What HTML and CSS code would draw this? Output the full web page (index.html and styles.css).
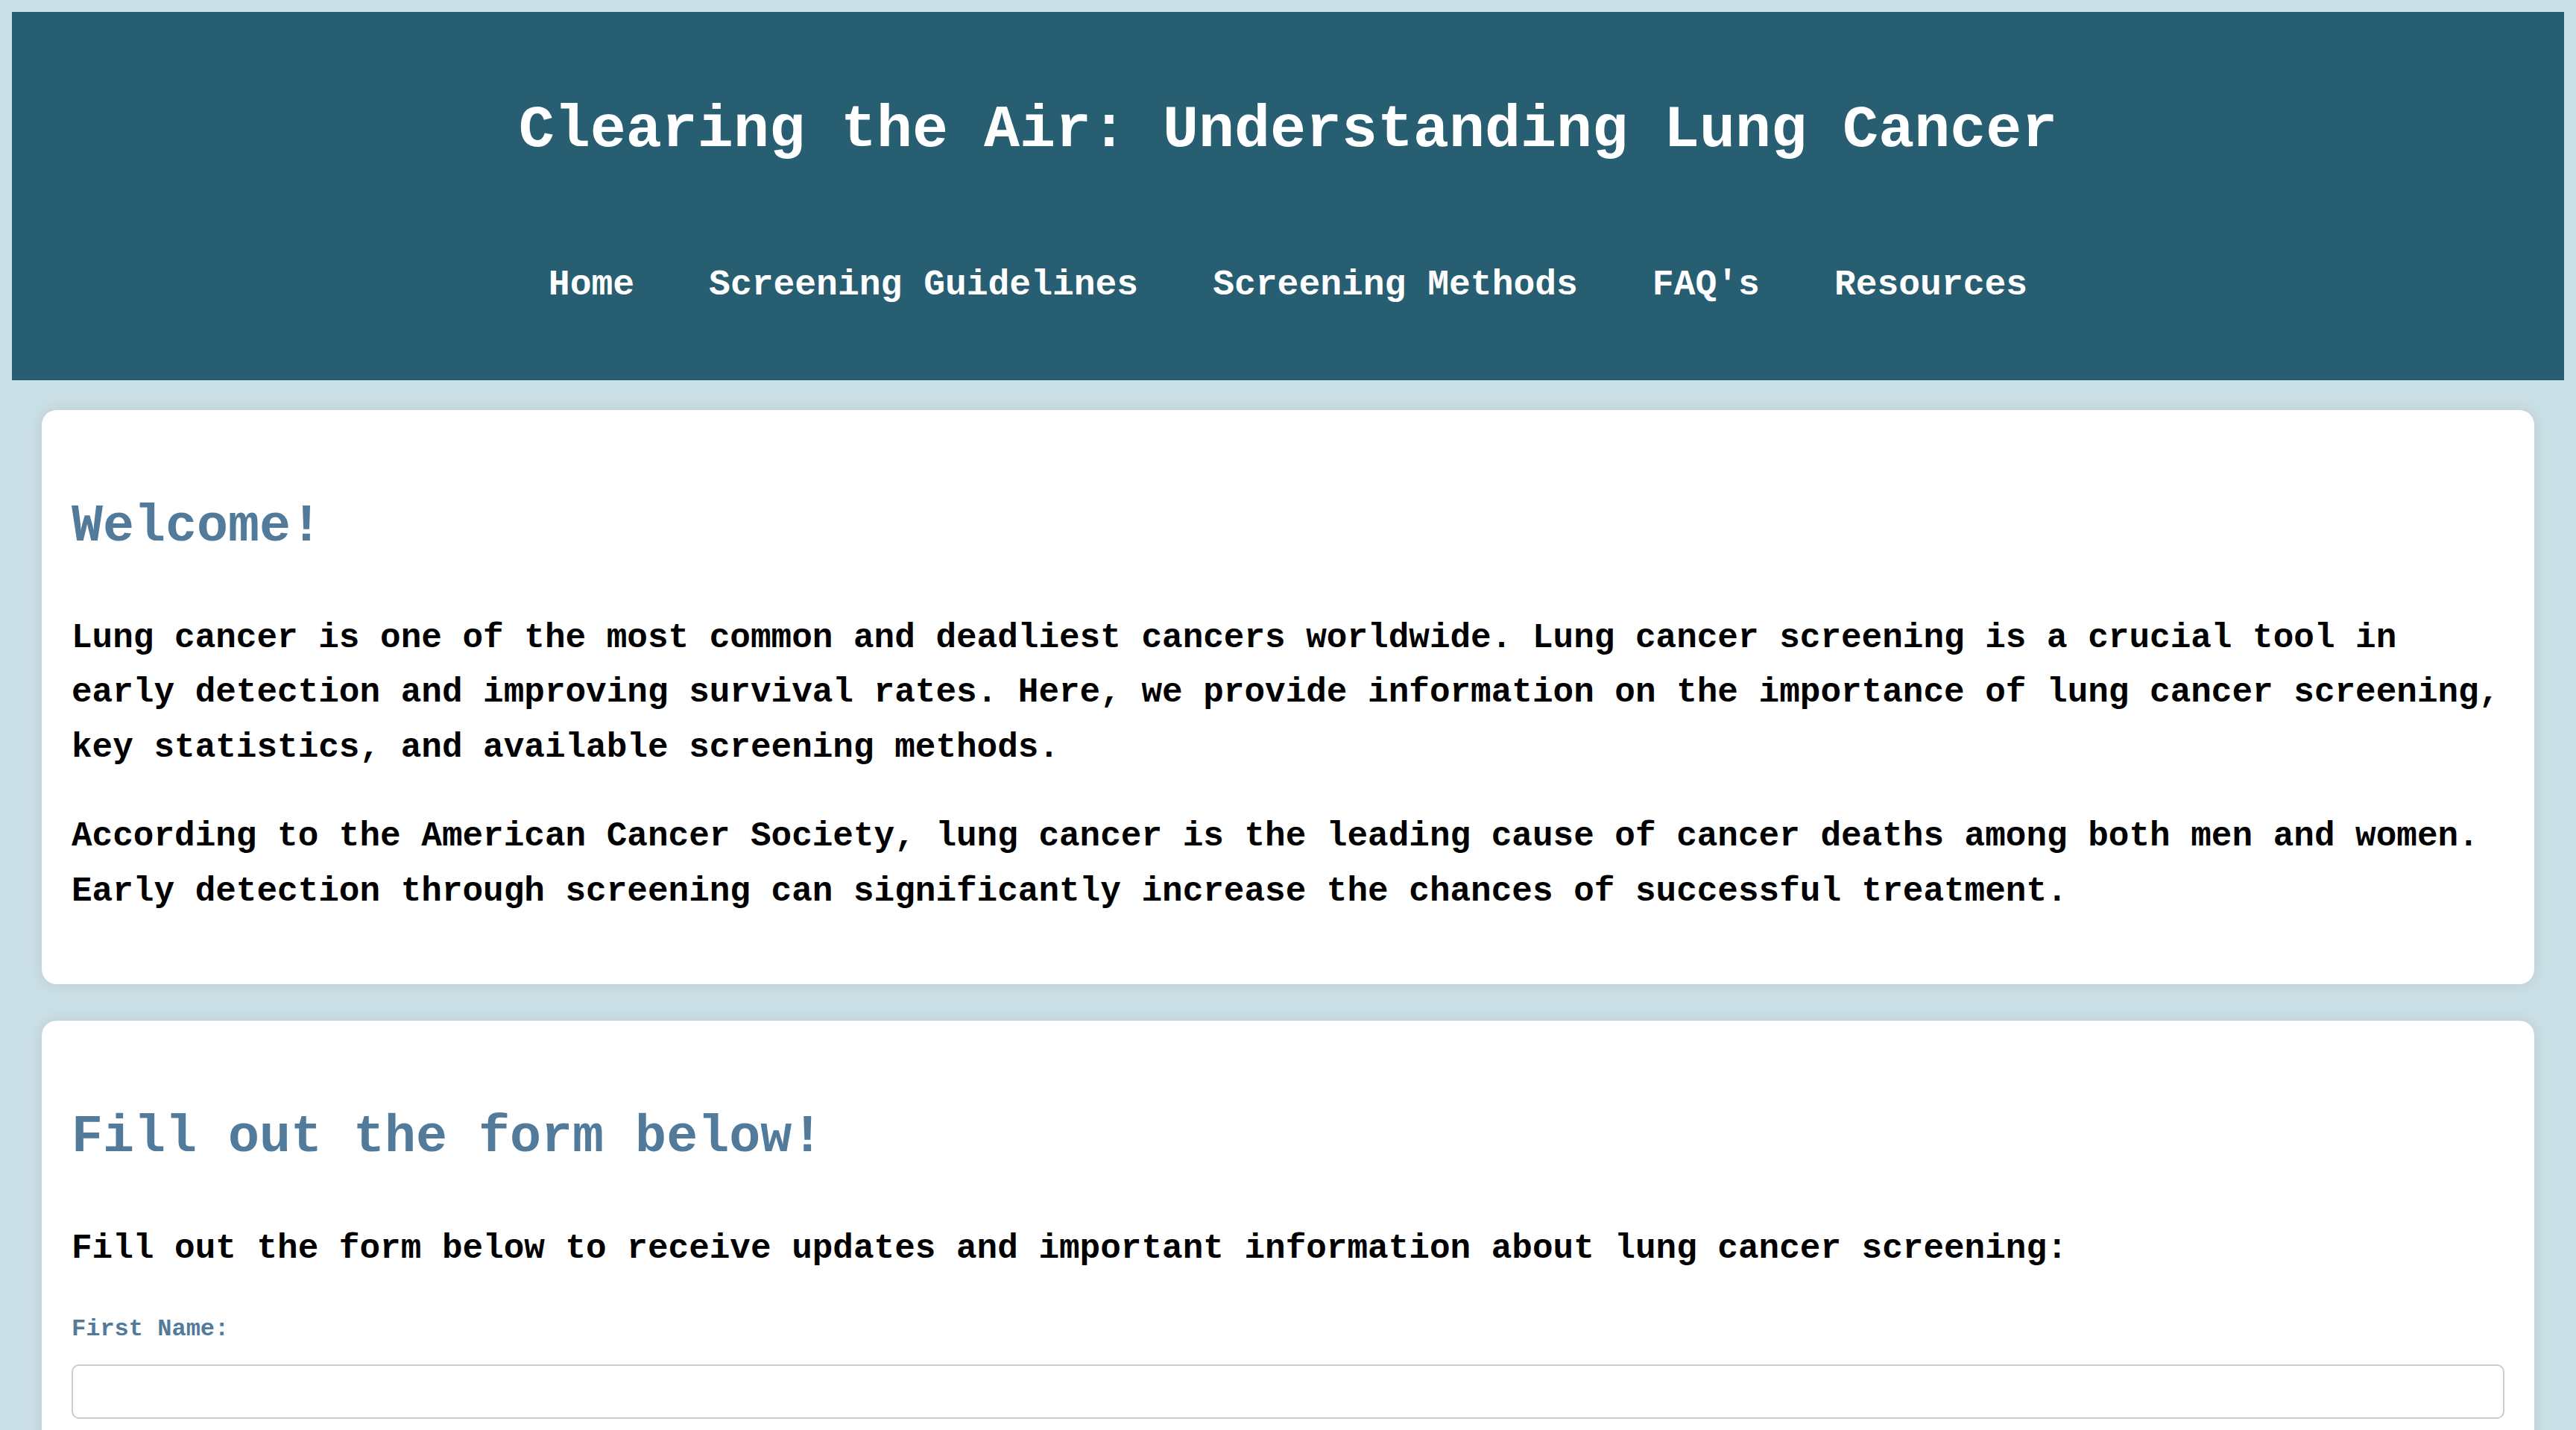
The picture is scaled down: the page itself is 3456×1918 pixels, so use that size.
FILE: index.html
```html
<!DOCTYPE html>
<html lang="en">
<head>
<meta charset="utf-8">
<title>Clearing the Air: Understanding Lung Cancer</title>
<link rel="stylesheet" href="styles.css">
</head>
<body>
<header class="site-header">
  <h1 class="site-title">Clearing the Air: Understanding Lung Cancer</h1>
  <nav class="site-nav">
    <a href="#" class="nav-link">Home</a>
    <a href="#" class="nav-link">Screening Guidelines</a>
    <a href="#" class="nav-link">Screening Methods</a>
    <a href="#" class="nav-link">FAQ's</a>
    <a href="#" class="nav-link">Resources</a>
  </nav>
</header>
<main class="content">
  <section class="card">
    <h2 class="card-title">Welcome!</h2>
    <p class="card-text">Lung cancer is one of the most common and deadliest cancers worldwide. Lung cancer screening is a crucial tool in early detection and improving survival rates. Here, we provide information on the importance of lung cancer screening, key statistics, and available screening methods.</p>
    <p class="card-text">According to the American Cancer Society, lung cancer is the leading cause of cancer deaths among both men and women. Early detection through screening can significantly increase the chances of successful treatment.</p>
  </section>
  <section class="card">
    <h2 class="card-title">Fill out the form below!</h2>
    <p class="card-text">Fill out the form below to receive updates and important information about lung cancer screening:</p>
    <form class="signup-form">
      <label class="field-label" for="first-name">First Name:</label>
      <input class="field-input" type="text" id="first-name" name="first-name">
    </form>
  </section>
</main>
</body>
</html>
```

FILE: styles.css
```css
html, body {
  background: #cbe0e6;
}
body {
  margin: 16px;
  font-family: "Liberation Mono", "Courier New", monospace;
  font-weight: bold;
  color: #000;
}
.site-header {
  background: #275e71;
  color: #fff;
  padding: 111px 40px 98px;
  text-align: center;
}
.site-title {
  margin: 0 0 131px;
  font-size: 80px;
  line-height: 1.2;
  font-weight: bold;
}
.site-nav {
  display: flex;
  justify-content: center;
  gap: 100px;
  font-size: 48px;
  line-height: 1.2;
}
.nav-link {
  color: #fff;
  text-decoration: none;
}
.content {
  padding: 40px 40px;
  display: flex;
  flex-direction: column;
  gap: 49px;
}
.card {
  background: #fff;
  border-radius: 20px;
  box-shadow: 0 0 20px rgba(0, 0, 0, 0.1);
  padding: 40px;
}
.card-title {
  margin: 75px 0 71px;
  font-size: 70px;
  line-height: 1.2;
  color: #527b9b;
}
.card-text {
  margin: 46px 0;
  font-size: 46px;
  line-height: 1.6;
}
.signup-form {
  display: flex;
  flex-direction: column;
}
.field-label {
  margin: 6px 0 29px;
  font-size: 32px;
  color: #527b9b;
}
.field-input {
  box-sizing: border-box;
  width: 100%;
  height: 73px;
  border: 2px solid #cccccc;
  border-radius: 10px;
  background: #fff;
  margin-bottom: 40px;
  font-family: inherit;
  font-size: 32px;
}
```
